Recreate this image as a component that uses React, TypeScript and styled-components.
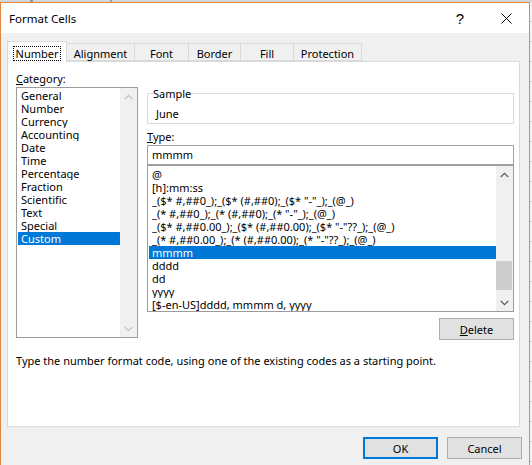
import styled, { createGlobalStyle } from 'styled-components'

const GlobalStyle = createGlobalStyle`
  html, body {
    margin: 0;
    padding: 0;
  }
  body {
    width: 532px;
    height: 465px;
    overflow: hidden;
    background: #ececec;
    font-family: "Noto Sans", "Open Sans", sans-serif;
    font-size: 11px;
    color: #000;
  }
`

const categories = [
  'General', 'Number', 'Currency', 'Accounting', 'Date', 'Time',
  'Percentage', 'Fraction', 'Scientific', 'Text', 'Special', 'Custom',
]

const codes = [
  '@',
  '[h]:mm:ss',
  '_($* #,##0_);_($* (#,##0);_($* "-"_);_(@_)',
  '_(* #,##0_);_(* (#,##0);_(* "-"_);_(@_)',
  '_($* #,##0.00_);_($* (#,##0.00);_($* "-"??_);_(@_)',
  '_(* #,##0.00_);_(* (#,##0.00);_(* "-"??_);_(@_)',
  'mmmm',
  'dddd',
  'dd',
  'yyyy',
  '[$-en-US]dddd, mmmm d, yyyy',
]

const tabs = [
  { label: 'Number', width: 60 },
  { label: 'Alignment', width: 69 },
  { label: 'Font', width: 55 },
  { label: 'Border', width: 53 },
  { label: 'Fill', width: 54 },
  { label: 'Protection', width: 69 },
]

const Screen = styled.div`
  display: flex;
  flex-direction: column;
  height: 465px;
`

const Ribbon = styled.div`
  flex: none;
  height: 2px;
  background: linear-gradient(90deg, #d6d6d6 0 30px, #9a9a9a 30px 33px, #d6d6d6 33px 110px, #a0a0a0 110px 112px, #d6d6d6 112px);
`

const Desk = styled.div`
  display: flex;
  flex: 1;
  min-height: 0;
`

const Sheet = styled.div`
  flex: 1;
  background: repeating-linear-gradient(180deg, #f4f4f4 0 19px, #d4d4d4 19px 20px);
`

const Window = styled.div`
  width: 530px;
  box-sizing: border-box;
  border: 1px solid #e3853f;
  border-bottom: none;
  display: flex;
  flex-direction: column;
  background: #f0f0f0;
`

const TitleBar = styled.div`
  flex: none;
  height: 30px;
  background: #fff;
  display: flex;
  align-items: center;
`

const Title = styled.div`
  flex: 1;
  padding-left: 8px;
  font-size: 11.5px;
`

const CaptionButton = styled.div`
  width: 46px;
  height: 30px;
  display: flex;
  align-items: center;
  justify-content: center;
  font-size: 15px;
  font-family: "Liberation Sans", sans-serif;
`

const Body = styled.div`
  flex: 1;
  display: flex;
  flex-direction: column;
  padding: 8px 0 0 6px;
`

const TabStrip = styled.div`
  display: flex;
  align-items: flex-end;
  height: 20px;
  position: relative;
  z-index: 1;
`

const Tab = styled.div<{ $active?: boolean; $w: number }>`
  box-sizing: border-box;
  width: ${p => p.$w}px;
  height: ${p => (p.$active ? 21 : 18)}px;
  margin-bottom: ${p => (p.$active ? -1 : 0)}px;
  margin-left: -1px;
  &:first-child { margin-left: 0; }
  border: 1px solid #d9d9d9;
  border-bottom: ${p => (p.$active ? 'none' : '1px solid #d9d9d9')};
  background: ${p => (p.$active ? '#fff' : '#f0f0f0')};
  display: flex;
  justify-content: center;
  padding-top: ${p => (p.$active ? 4 : 2)}px;
`

const TabLabel = styled.span<{ $focus?: boolean }>`
  line-height: 13px;
  height: 13px;
  padding: 0 2px;
  border: 1px dotted ${p => (p.$focus ? '#000' : 'transparent')};
`

const Panel = styled.div`
  box-sizing: border-box;
  height: 366px;
  margin-right: 9px;
  border: 1px solid #d9d9d9;
  background: #fff;
  padding: 10px 0 0 8px;
  display: flex;
  flex-direction: column;
`

const Columns = styled.div`
  display: flex;
  gap: 9px;
`

const LeftCol = styled.div`
  width: 122px;
  display: flex;
  flex-direction: column;
`

const RightCol = styled.div`
  width: 367px;
  display: flex;
  flex-direction: column;
  padding-top: 15px;
`

const Label = styled.div`
  line-height: 13px;
  height: 13px;
  margin-bottom: 2px;
`

const ListBox = styled.div<{ $h: number; $padTop: number }>`
  box-sizing: border-box;
  height: ${p => p.$h}px;
  border: 1px solid #9c9c9c;
  padding: ${p => p.$padTop}px 0 0 1px;
  display: flex;
  background: #fff;
  overflow: hidden;
`

const Items = styled.div`
  flex: 1;
  min-width: 0;
  overflow: hidden;
`

const Item = styled.div<{ $selected?: boolean }>`
  height: 13px;
  line-height: 13px;
  padding-left: 3px;
  white-space: nowrap;
  overflow: hidden;
  background: ${p => (p.$selected ? '#0078d7' : 'transparent')};
  color: ${p => (p.$selected ? '#fff' : '#000')};
`

const ScrollBar = styled.div<{ $padTop: number }>`
  width: 17px;
  margin-top: -${p => p.$padTop}px;
  background: #f0f0f0;
  display: flex;
  flex-direction: column;
`

const Arrow = styled.div`
  height: 17px;
  display: flex;
  align-items: center;
  justify-content: center;
`

const Track = styled.div`
  flex: 1;
  display: flex;
  flex-direction: column;
`

const Thumb = styled.div<{ $top: number; $h: number }>`
  margin: ${p => p.$top}px 1px 0 0;
  height: ${p => p.$h}px;
  background: #cdcdcd;
`

const Group = styled.fieldset`
  margin: 0;
  padding: 0 0 3px 8px;
  border: 1px solid #dcdcdc;
  min-width: 0;
`

const Legend = styled.legend`
  padding: 0;
  margin-left: -3px;
  line-height: 13px;
`

const Sample = styled.div`
  line-height: 13px;
  padding-top: 7px;
`

const TypeLabel = styled(Label)`
  margin-top: 6px;
`

const TypeInput = styled.div`
  box-sizing: border-box;
  height: 20px;
  border: 1px solid #a2a2a2;
  padding-left: 4px;
  line-height: 18px;
`

const ButtonRow = styled.div`
  display: flex;
  justify-content: flex-end;
  margin-top: 6px;
`

const Button = styled.div<{ $default?: boolean }>`
  box-sizing: border-box;
  width: 75px;
  height: 22px;
  background: #e1e1e1;
  border: ${p => (p.$default ? '2px solid #0078d7' : '1px solid #adadad')};
  display: flex;
  align-items: center;
  justify-content: center;
`

const Hint = styled.div`
  margin-top: 14px;
  line-height: 13px;
`

const Footer = styled.div`
  display: flex;
  justify-content: flex-end;
  gap: 9px;
  margin-top: 10px;
  padding-right: 7px;
`

function Chevron({ up, color }: { up?: boolean; color: string }) {
  return (
    <svg width="9" height="6" viewBox="0 0 9 6">
      <polyline
        points={up ? '0.8,5 4.5,1.3 8.2,5' : '0.8,1 4.5,4.7 8.2,1'}
        fill="none"
        stroke={color}
        strokeWidth="1.3"
      />
    </svg>
  )
}

function CloseGlyph() {
  return (
    <svg width="11" height="11" viewBox="0 0 11 11">
      <path d="M0.5 0.5 L10.5 10.5 M10.5 0.5 L0.5 10.5" stroke="#000" strokeWidth="1" />
    </svg>
  )
}

export default function App() {
  return (
    <Screen>
      <GlobalStyle />
      <Ribbon />
      <Desk>
        <Window>
          <TitleBar>
            <Title>Format Cells</Title>
            <CaptionButton>?</CaptionButton>
            <CaptionButton><CloseGlyph /></CaptionButton>
          </TitleBar>
          <Body>
            <TabStrip>
              {tabs.map((t, i) => (
                <Tab key={t.label} $w={t.width} $active={i === 0}>
                  <TabLabel $focus={i === 0}>{t.label}</TabLabel>
                </Tab>
              ))}
            </TabStrip>
            <Panel>
              <Columns>
                <LeftCol>
                  <Label><u>C</u>ategory:</Label>
                  <ListBox $h={251} $padTop={1}>
                    <Items>
                      {categories.map(c => (
                        <Item key={c} $selected={c === 'Custom'}>{c}</Item>
                      ))}
                    </Items>
                    <ScrollBar $padTop={1}>
                      <Arrow><Chevron up color="#c2c2c2" /></Arrow>
                      <Track />
                      <Arrow><Chevron color="#c2c2c2" /></Arrow>
                    </ScrollBar>
                  </ListBox>
                </LeftCol>
                <RightCol>
                  <Group>
                    <Legend>Sample</Legend>
                    <Sample>June</Sample>
                  </Group>
                  <TypeLabel><u>T</u>ype:</TypeLabel>
                  <TypeInput>mmmm</TypeInput>
                  <ListBox $h={147} $padTop={2}>
                    <Items>
                      {codes.map(c => (
                        <Item key={c} $selected={c === 'mmmm'}>{c}</Item>
                      ))}
                    </Items>
                    <ScrollBar $padTop={2}>
                      <Arrow><Chevron up color="#606060" /></Arrow>
                      <Track>
                        <Thumb $top={78} $h={29} />
                      </Track>
                      <Arrow><Chevron color="#606060" /></Arrow>
                    </ScrollBar>
                  </ListBox>
                  <ButtonRow>
                    <Button><span><u>D</u>elete</span></Button>
                  </ButtonRow>
                </RightCol>
              </Columns>
              <Hint>Type the number format code, using one of the existing codes as a starting point.</Hint>
            </Panel>
            <Footer>
              <Button $default>OK</Button>
              <Button>Cancel</Button>
            </Footer>
          </Body>
        </Window>
        <Sheet />
      </Desk>
    </Screen>
  )
}
